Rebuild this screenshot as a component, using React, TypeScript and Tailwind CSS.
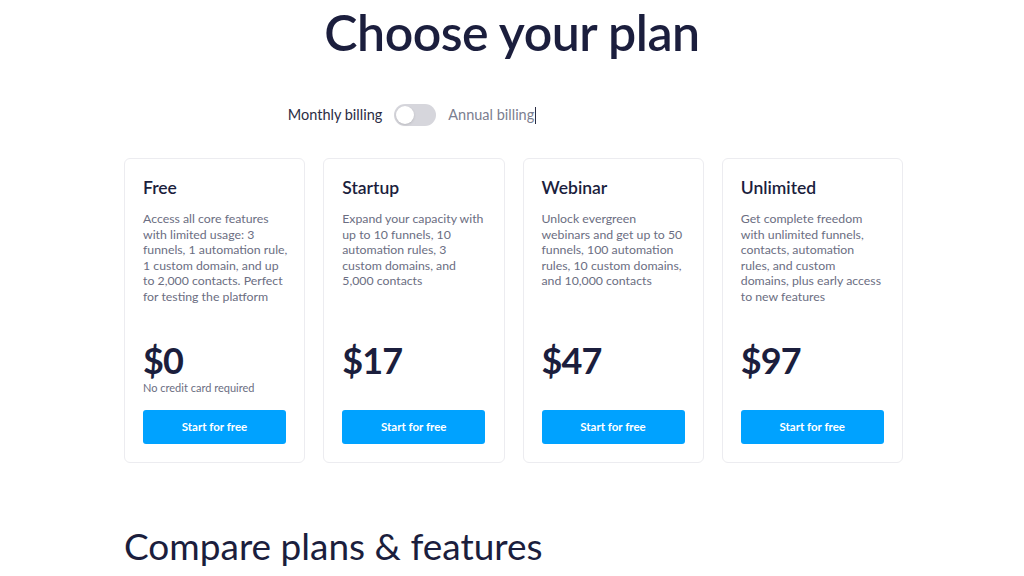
import React from 'react';

type Plan = {
  name: string;
  lines: string[];
  price: string;
  note?: string;
};

// description lines kept as they break in the design
const plans: Plan[] = [
  {
    name: 'Free',
    lines: [
      'Access all core features',
      'with limited usage: 3',
      'funnels, 1 automation rule,',
      '1 custom domain, and up',
      'to 2,000 contacts. Perfect',
      'for testing the platform',
    ],
    price: '$0',
    note: 'No credit card required',
  },
  {
    name: 'Startup',
    lines: ['Expand your capacity with', 'up to 10 funnels, 10', 'automation rules, 3', 'custom domains, and', '5,000 contacts'],
    price: '$17',
  },
  {
    name: 'Webinar',
    lines: [
      'Unlock evergreen',
      'webinars and get up to 50',
      'funnels, 100 automation',
      'rules, 10 custom domains,',
      'and 10,000 contacts',
    ],
    price: '$47',
  },
  {
    name: 'Unlimited',
    lines: [
      'Get complete freedom',
      'with unlimited funnels,',
      'contacts, automation',
      'rules, and custom',
      'domains, plus early access',
      'to new features',
    ],
    price: '$97',
  },
];

function PlanCard({ plan }: { plan: Plan }) {
  return (
    <div className="h-[305px] flex flex-col border border-[#ececf0] rounded-md bg-white px-[18px] pt-[18px] pb-[18px]">
      <h3 className="text-[17.5px] leading-[22px] font-semibold text-[#1b1e3d]">{plan.name}</h3>
      <p className="mt-[12px] text-[12.3px] leading-[15.5px] text-[#6b6e82]">
        {plan.lines.map((l) => (
          <span key={l} className="block whitespace-nowrap">
            {l}
          </span>
        ))}
      </p>

      <div className="mt-auto">
        <div className="text-[36px] leading-none font-bold text-[#1b1e3d] tracking-tight">{plan.price}</div>
        <div className="mt-[3px] h-[14px] text-[11px] leading-[14px] text-[#6b6e82]">{plan.note}</div>
        <button className="mt-[15px] w-[143px] h-[34px] rounded-[3px] bg-[#00a2ff] text-white text-[11.5px] font-bold">
          Start for free
        </button>
      </div>
    </div>
  );
}

export default function App() {
  return (
    <div className="min-h-screen bg-white font-['Lato',sans-serif] overflow-hidden">
      <h1 className="pt-[5px] text-center text-[50px] leading-[54px] font-semibold text-[#1b1e3d] tracking-[-0.5px]">
        Choose your plan
      </h1>

      {/* Billing toggle */}
      <div className="mt-[45px] flex items-center justify-center gap-3 pr-[200px]">
        <span className="text-[14.5px] text-[#2b2d45]">Monthly billing</span>
        <span className="relative w-[42px] h-[22px] rounded-full bg-[#d6d6dc]">
          <span className="absolute left-[2px] top-[2px] w-[18px] h-[18px] rounded-full bg-white shadow-sm" />
        </span>
        <span className="text-[14.5px] text-[#7b7e90] flex items-center">
          Annual billing
          <span className="ml-px w-px h-[17px] bg-[#2b2d45]" />
        </span>
      </div>

      <div className="ml-[124px] w-[779px]">
        {/* Plans */}
        <div className="mt-[32px] grid grid-cols-4 gap-[18px]">
          {plans.map((p) => (
            <PlanCard key={p.name} plan={p} />
          ))}
        </div>

        <h2 className="mt-[61px] text-[37px] leading-[44px] text-[#1b1e3d]">Compare plans &amp; features</h2>
      </div>
    </div>
  );
}
